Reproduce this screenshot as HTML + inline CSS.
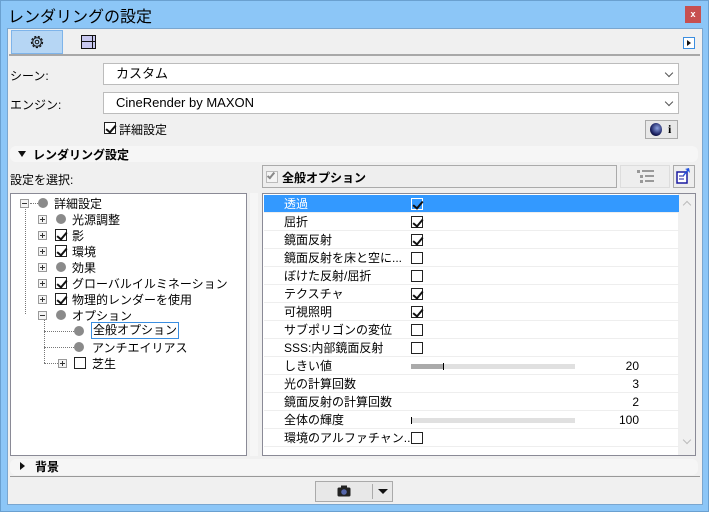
<!DOCTYPE html>
<html><head><meta charset="utf-8"><style>
*{box-sizing:border-box;margin:0;padding:0}
body{width:709px;height:512px;background:#8cc6f7;font-family:"Liberation Sans","Noto Sans CJK JP",sans-serif;font-size:12px;color:#000;position:relative;overflow:hidden}
.a{position:absolute}
.win{left:0;top:0;width:709px;height:512px;border:1px solid #6aa0d0;}
.content{left:7px;top:28px;width:696px;height:477px;background:#f0f0f0;border:1px solid #7aa6cf}
.dd{background:#fff;border:1px solid #bcbcbc;height:22px;padding-left:12px;line-height:19px;font-size:13px}
.dd:after{content:"";position:absolute;right:6px;top:6px;width:5px;height:5px;border-right:1.5px solid #555;border-bottom:1.5px solid #555;transform:rotate(45deg)}
.cb{width:12px;height:12px;border:1px solid #222;background:#fff}
.ck:after{content:"";position:absolute;left:3px;top:0px;width:4px;height:8px;border-right:2px solid #111;border-bottom:2px solid #111;transform:rotate(40deg)}
.dot{width:10px;height:10px;border-radius:50%;background:#8a8a8a}
.ex{width:9px;height:9px;border:1px solid #999;background:#f4f4f4}
.ex:before{content:"";position:absolute;left:1px;top:3px;width:5px;height:1px;background:#333}
.ex.p:after{content:"";position:absolute;left:3px;top:1px;width:1px;height:5px;background:#333}
.row{left:1px;width:415px;height:18px;border-bottom:1px solid #eee}
.row span{position:absolute;left:20px;top:0px}
.sl{left:147px;top:7px;width:164px;height:5px;background:#e0e0e0}
.val{right:40px;top:2px;text-align:right;width:60px}
.tr{position:absolute;white-space:nowrap}
</style></head><body>
<div class="a win"></div>
<div class="a" style="left:8px;top:3px;font-size:16px">レンダリングの設定</div>
<div class="a" style="left:685px;top:6px;width:16px;height:17px;background:#c75050;color:#fff;font-size:9px;font-weight:bold;text-align:center;line-height:16px">x</div>
<div class="a content"></div>
<div class="a" style="left:11px;top:30px;width:52px;height:24px;background:#b6d6f4;border:1px solid #7eb4ea"></div>
<svg class="a" style="left:29px;top:34px" width="16" height="16" viewBox="0 0 16 16"><circle cx="8" cy="8" r="5.5" fill="none" stroke="#111" stroke-width="1.3" stroke-dasharray="2.2 1.6"/><circle cx="8" cy="8" r="4.3" fill="none" stroke="#111" stroke-width="1"/><circle cx="8" cy="8" r="1.8" fill="none" stroke="#111"/></svg>
<div class="a" style="left:81px;top:35px;width:15px;height:14px;background:#c8c8f0;border:1.5px solid #111"></div>
<div class="a" style="left:81px;top:41px;width:15px;height:1px;background:#111"></div>
<div class="a" style="left:92px;top:35px;width:1px;height:14px;background:#111"></div>
<div class="a" style="left:9px;top:54px;width:691px;height:2px;background:#a8a8a8"></div>
<div class="a" style="left:683px;top:37px;width:12px;height:12px;border:1px solid #3b8ee0;background:#fff"></div>
<div class="a" style="left:687px;top:40px;width:0;height:0;border-left:4px solid #111;border-top:3px solid transparent;border-bottom:3px solid transparent"></div>
<div class="a" style="left:10px;top:67px">シーン:</div>
<div class="a dd" style="left:103px;top:63px;width:576px">カスタム</div>
<div class="a" style="left:10px;top:96px">エンジン:</div>
<div class="a dd" style="left:103px;top:92px;width:576px">CineRender by MAXON</div>
<div class="a cb ck" style="left:104px;top:122px"></div>
<div class="a" style="left:119px;top:121px">詳細設定</div>
<div class="a" style="left:645px;top:120px;width:33px;height:19px;border:1px solid #aaa;background:#e8e8e8"></div>
<div class="a" style="left:650px;top:123px;width:12px;height:13px;border-radius:50%;background:radial-gradient(circle at 60% 40%,#8aa0e0,#1a2060 60%,#000)"></div>
<div class="a" style="left:668px;top:122px;font-weight:bold;font-family:'Liberation Serif',serif">i</div>
<div class="a" style="left:10px;top:146px;width:688px;height:16px;background:#f6f6f6;border-radius:6px"></div>
<div class="a" style="left:18px;top:151px;border-top:6px solid #111;border-left:4px solid transparent;border-right:4px solid transparent"></div>
<div class="a" style="left:33px;top:146px;font-weight:bold">レンダリング設定</div>
<div class="a" style="left:10px;top:171px">設定を選択:</div>
<div class="a" style="left:10px;top:193px;width:237px;height:263px;background:#fff;border:1px solid #8a8a96"></div>
<div class="a" style="left:250px;top:193px;width:8px;height:263px;background:#f6f6f6"></div>
<div class="a" style="left:25px;top:204px;height:110px;border-left:1px dotted #777"></div>
<div class="a" style="left:44px;top:318px;height:45px;border-left:1px dotted #777"></div>
<div class="a ex" style="left:20px;top:199px"></div><div class="a" style="left:30px;top:203px;width:8px;border-top:1px dotted #777"></div><div class="a dot" style="left:38px;top:198px"></div><div class="tr" style="left:54px;top:195px">詳細設定</div>
<div class="a ex p" style="left:38px;top:215px"></div><div class="a dot" style="left:56px;top:214px"></div><div class="tr" style="left:72px;top:211px">光源調整</div>
<div class="a ex p" style="left:38px;top:231px"></div><div class="a cb ck" style="left:55px;top:229px"></div><div class="tr" style="left:72px;top:227px">影</div>
<div class="a ex p" style="left:38px;top:247px"></div><div class="a cb ck" style="left:55px;top:245px"></div><div class="tr" style="left:72px;top:243px">環境</div>
<div class="a ex p" style="left:38px;top:263px"></div><div class="a dot" style="left:56px;top:262px"></div><div class="tr" style="left:72px;top:259px">効果</div>
<div class="a ex p" style="left:38px;top:279px"></div><div class="a cb ck" style="left:55px;top:277px"></div><div class="tr" style="left:72px;top:275px">グローバルイルミネーション</div>
<div class="a ex p" style="left:38px;top:295px"></div><div class="a cb ck" style="left:55px;top:293px"></div><div class="tr" style="left:72px;top:291px">物理的レンダーを使用</div>
<div class="a ex" style="left:38px;top:311px"></div><div class="a dot" style="left:56px;top:310px"></div><div class="tr" style="left:72px;top:307px">オプション</div>
<div class="a" style="left:44px;top:331px;width:30px;border-top:1px dotted #777"></div><div class="a dot" style="left:74px;top:326px"></div><div class="tr" style="left:91px;top:322px;border:1px solid #3b8ee0;padding:0 1px;line-height:15px">全般オプション</div>
<div class="a" style="left:44px;top:347px;width:30px;border-top:1px dotted #777"></div><div class="a dot" style="left:74px;top:342px"></div><div class="tr" style="left:92px;top:339px">アンチエイリアス</div>
<div class="a" style="left:44px;top:363px;width:14px;border-top:1px dotted #777"></div><div class="a ex p" style="left:58px;top:359px"></div><div class="a cb" style="left:74px;top:357px"></div><div class="tr" style="left:92px;top:355px">芝生</div>
<div class="a" style="left:262px;top:165px;width:355px;height:23px;border:1px solid #aaa;background:#eee"></div>
<div class="a" style="left:266px;top:171px;width:12px;height:12px;border:1px solid #bbb;background:#f4f4f4"></div>
<div class="a" style="left:269px;top:171px;width:4px;height:8px;border-right:2px solid #888;border-bottom:2px solid #888;transform:rotate(40deg)"></div>
<div class="a" style="left:282px;top:169px;font-weight:bold">全般オプション</div>
<div class="a" style="left:620px;top:165px;width:50px;height:23px;border:1px solid #ddd;background:#eee"></div>
<svg class="a" style="left:637px;top:169px" width="18" height="16"><g fill="#999"><rect x="0" y="1" width="3" height="3"/><rect x="5" y="1" width="12" height="2"/><rect x="3" y="6" width="3" height="3"/><rect x="8" y="6" width="9" height="2"/><rect x="3" y="11" width="3" height="3"/><rect x="8" y="11" width="9" height="2"/></g></svg>
<div class="a" style="left:673px;top:165px;width:22px;height:23px;border:1px solid #aaa;background:#eee"></div>
<svg class="a" style="left:676px;top:167px" width="16" height="18"><rect x="1" y="5" width="10" height="11" fill="#fff" stroke="#1a1aa0" stroke-width="1.5"/><path d="M3 9h5M3 12h5" stroke="#1a1aa0"/><path d="M8 9 L12 4 L14 6 L13 1 L9 2 L11 3 L7 8z" fill="#2050e0"/></svg>
<div class="a" style="left:262px;top:193px;width:434px;height:263px;background:#fff;border:1px solid #8a8a96;overflow:hidden">
<div class="a" style="right:0;top:0;width:17px;height:261px;background:#f0f0f0"></div>
<div class="a" style="right:5px;top:8px;width:6px;height:6px;border-left:1.5px solid #bbb;border-top:1.5px solid #bbb;transform:rotate(45deg)"></div>
<div class="a" style="right:5px;top:243px;width:6px;height:6px;border-right:1.5px solid #bbb;border-bottom:1.5px solid #bbb;transform:rotate(45deg)"></div>
<div class="a row" style="top:1px;background:#3399ff;color:#fff"><span>透過</span><div class="a cb ck" style="left:147px;top:3px;border-color:#fff;background:#3399ff"></div></div>
<style>.row .ck:after{border-color:#111}</style>
<div class="a row" style="top:19px"><span>屈折</span><div class="a cb ck" style="left:147px;top:3px"></div></div>
<div class="a row" style="top:37px"><span>鏡面反射</span><div class="a cb ck" style="left:147px;top:3px"></div></div>
<div class="a row" style="top:55px"><span>鏡面反射を床と空に...</span><div class="a cb" style="left:147px;top:3px"></div></div>
<div class="a row" style="top:73px"><span>ぼけた反射/屈折</span><div class="a cb" style="left:147px;top:3px"></div></div>
<div class="a row" style="top:91px"><span>テクスチャ</span><div class="a cb ck" style="left:147px;top:3px"></div></div>
<div class="a row" style="top:109px"><span>可視照明</span><div class="a cb ck" style="left:147px;top:3px"></div></div>
<div class="a row" style="top:127px"><span>サブポリゴンの変位</span><div class="a cb" style="left:147px;top:3px"></div></div>
<div class="a row" style="top:145px"><span>SSS:内部鏡面反射</span><div class="a cb" style="left:147px;top:3px"></div></div>
<div class="a row" style="top:163px"><span>しきい値</span><div class="a sl"><div class="a" style="left:0;top:0;width:32px;height:5px;background:#aaa"></div><div class="a" style="left:32px;top:-1px;width:1px;height:7px;background:#000"></div></div><div class="a val">20</div></div>
<div class="a row" style="top:181px"><span>光の計算回数</span><div class="a val">3</div></div>
<div class="a row" style="top:199px"><span>鏡面反射の計算回数</span><div class="a val">2</div></div>
<div class="a row" style="top:217px"><span>全体の輝度</span><div class="a sl"><div class="a" style="left:0;top:-1px;width:1px;height:7px;background:#000"></div></div><div class="a val">100</div></div>
<div class="a row" style="top:235px"><span>環境のアルファチャン...</span><div class="a cb" style="left:147px;top:3px"></div></div>
</div>
<div class="a" style="left:10px;top:459px;width:688px;height:16px;background:#f6f6f6;border-radius:6px"></div>
<div class="a" style="left:20px;top:462px;border-left:5px solid #111;border-top:4px solid transparent;border-bottom:4px solid transparent"></div>
<div class="a" style="left:35px;top:458px;font-weight:bold">背景</div>
<div class="a" style="left:10px;top:476px;width:690px;height:1px;background:#999"></div>
<div class="a" style="left:315px;top:481px;width:78px;height:21px;border:1px solid #aaa;background:#e8e8e8"></div>
<div class="a" style="left:372px;top:484px;width:1px;height:15px;background:#aaa"></div>
<svg class="a" style="left:337px;top:485px" width="14" height="12"><rect x="0.5" y="2.5" width="13" height="9" rx="1.5" fill="#222"/><rect x="4" y="0.5" width="6" height="3" fill="#222"/><circle cx="7" cy="7" r="2.8" fill="#5566aa"/></svg>
<div class="a" style="left:378px;top:489px;border-top:5px solid #111;border-left:5px solid transparent;border-right:5px solid transparent"></div>
</body></html>
